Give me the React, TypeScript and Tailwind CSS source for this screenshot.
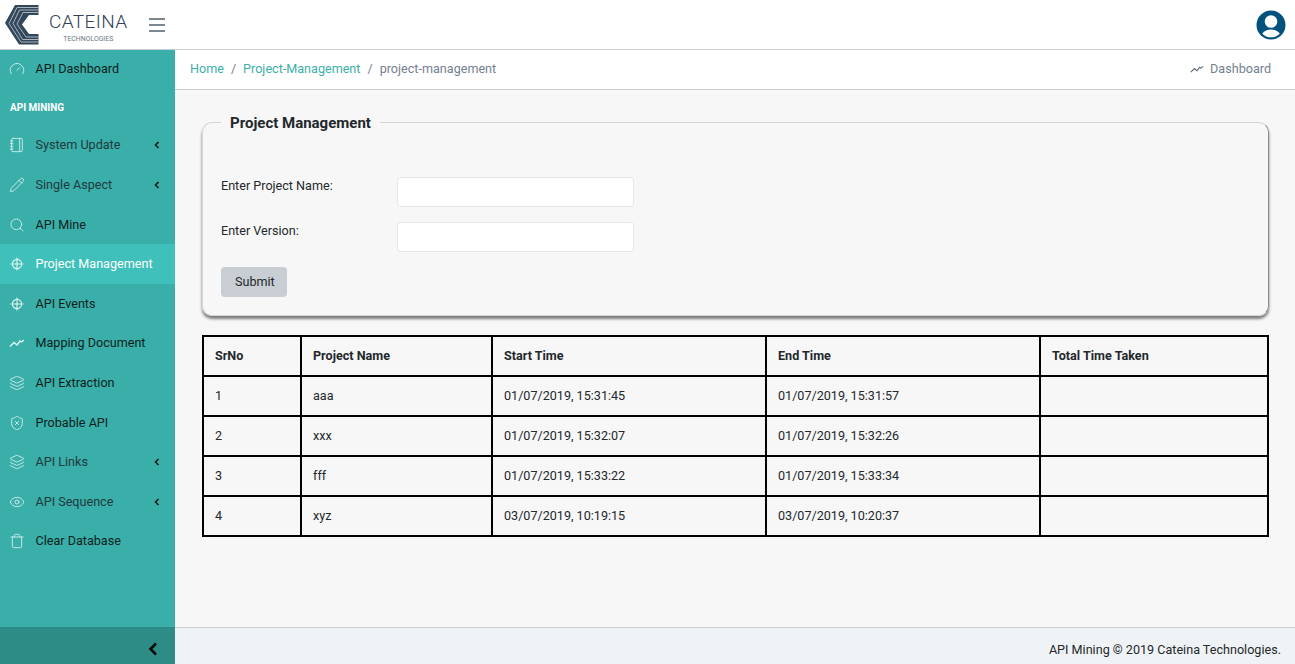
import React from "react";
import { Eye, Layers, Notebook, Pencil, Search, Trash, ShieldX, Gauge } from "lucide-react";

const ic = "w-4 h-4 text-[#e2f6f3]";
const s = 1.2;
const Cross = () => (
  <svg viewBox="-1 -1 16 16" className={ic} fill="none" stroke="currentColor" strokeWidth={1.1}>
    <circle cx="7" cy="7" r="4.6" />
    <path d="M7 0.5v13M0.5 7h13" />
  </svg>
);
const Trend = ({ className = ic }: { className?: string }) => (
  <svg viewBox="0 0 16 16" className={className} fill="none" stroke="currentColor" strokeWidth={1.3}>
    <path d="M1 11.5 5 7.5l3 2.5 3-4 1.5 1L15 5" />
  </svg>
);
const Chevron = () => (
  <svg viewBox="0 0 8 10" className="w-[6px] h-[8px] text-[#111]" fill="none" stroke="currentColor" strokeWidth={2}>
    <path d="M6 1 2 5l4 4" />
  </svg>
);

type Item = { label: string; icon: React.ReactNode; chev?: boolean; active?: boolean; muted?: boolean; h: string };
const items: Item[] = [
  { label: "System Update", icon: <Notebook className={ic} strokeWidth={s} />, chev: true, muted: true, h: "h-10" },
  { label: "Single Aspect", icon: <Pencil className={ic} strokeWidth={s} />, chev: true, muted: true, h: "h-10" },
  { label: "API Mine", icon: <Search className={ic} strokeWidth={s} />, h: "h-[39px] pt-[1px]" },
  { label: "Project Management", icon: <Cross />, active: true, h: "h-10" },
  { label: "API Events", icon: <Cross />, h: "h-[39px] pt-[1px]" },
  { label: "Mapping Document", icon: <Trend />, h: "h-10" },
  { label: "API Extraction", icon: <Layers className={ic} strokeWidth={s} />, h: "h-10" },
  { label: "Probable API", icon: <ShieldX className={ic} strokeWidth={s} />, h: "h-[39px] pt-[1px]" },
  { label: "API Links", icon: <Layers className={ic} strokeWidth={s} />, chev: true, muted: true, h: "h-10" },
  { label: "API Sequence", icon: <Eye className={ic} strokeWidth={s} />, chev: true, muted: true, h: "h-[39px] pt-[1px]" },
  { label: "Clear Database", icon: <Trash className={ic} strokeWidth={s} />, h: "h-[39px] pt-[1px]" },
];

const rows = [
  ["1", "aaa", "01/07/2019, 15:31:45", "01/07/2019, 15:31:57", ""],
  ["2", "xxx", "01/07/2019, 15:32:07", "01/07/2019, 15:32:26", ""],
  ["3", "fff", "01/07/2019, 15:33:22", "01/07/2019, 15:33:34", ""],
  ["4", "xyz", "03/07/2019, 10:19:15", "03/07/2019, 10:20:37", ""],
];
const heads = ["SrNo", "Project Name", "Start Time", "End Time", "Total Time Taken"];
const widths = ["w-[98px]", "w-[191px]", "w-[274px]", "w-[274px]", ""];

export default function App() {
  return (
    <div className="h-[664px] w-[1295px] overflow-hidden flex flex-col bg-[#f7f7f7] text-[12.6px] text-[#23282c] font-['Roboto',sans-serif]">
      <header className="h-[50px] shrink-0 bg-white border-b border-[#c8ced3] flex items-center">
        <div className="w-[141px] flex items-center pl-[5px] shrink-0">
          <svg viewBox="0 0 34 40" className="w-[34px] h-[40px]">
            <path d="M10 0H33.5V10H24L17 19.5 24 29H33.5V39.5H14L0 18Z" fill="#33475b" />
            <g fill="none" stroke="#c9d1d8" strokeWidth={0.8}>
              <path d="M33.5 2.5H12L4 18.5 16 37H33.5" />
              <path d="M33.5 5H14.5L8 18.5 17.5 34.5H33.5" />
              <path d="M33.5 7.5H18L12 19 21 32H33.5" />
            </g>
          </svg>
          <div className="ml-[10px] flex flex-col items-center pt-[5px]">
            <span className="text-[19px] leading-[22px] font-light tracking-[0.4px] text-[#2f4256]">CATEINA</span>
            <span className="text-[6.9px] leading-[8px] mt-[2px] text-[#6b7985]">TECHNOLOGIES</span>
          </div>
        </div>
        <div className="ml-[8px] w-[16px] flex flex-col gap-[4px]">
          <div className="h-[2px] bg-[#7d8790]" />
          <div className="h-[2px] bg-[#7d8790]" />
          <div className="h-[2px] bg-[#7d8790]" />
        </div>
        <div className="ml-auto mr-[9px]">
          <svg viewBox="0 0 30 30" className="w-[30px] h-[30px]">
            <defs>
              <clipPath id="c"><circle cx="15" cy="15" r="12.3" /></clipPath>
            </defs>
            <circle cx="15" cy="15" r="14.5" fill="#03527e" />
            <circle cx="15" cy="11.5" r="6.3" fill="#fff" />
            <g clipPath="url(#c)" fill="#fff">
              <ellipse cx="15" cy="27" rx="10" ry="7.6" />
            </g>
          </svg>
        </div>
      </header>

      <div className="flex-1 flex min-h-0">
        <aside className="w-[175px] shrink-0 flex flex-col bg-[#3aaea8] text-[#0e1f1e]">
          <div className="flex-1">
            <div className="h-[38px] flex items-center">
              <span className="w-[35.5px] pl-[9px] flex -mt-[1px]"><Gauge className={ic} strokeWidth={s} /></span>
              <span>API Dashboard</span>
            </div>
            <div className="h-[37px] pt-[13px] pl-[10px] text-[10px] font-bold text-white leading-[14px]">API MINING</div>
            {items.map((it) => (
              <div key={it.label} className={`${it.h} flex items-center ${it.active ? "bg-[#40c0ba] text-white" : ""} ${it.muted ? "text-[#1f3a3f]" : ""}`}>
                <span className="w-[35.5px] pl-[9px] flex -mt-[1px]">{it.icon}</span>
                <span>{it.label}</span>
                {it.chev && <span className="ml-auto mr-[15px] flex"><Chevron /></span>}
              </div>
            ))}
          </div>
          <div className="h-[37px] bg-[#2e8c86] flex items-center justify-end pt-[6px] pr-[17px]">
            <svg viewBox="0 0 10 14" className="w-[10px] h-[14px] text-[#0a0a0a]" fill="none" stroke="currentColor" strokeWidth={2.6}>
              <path d="M8 1.5 2.5 7 8 12.5" />
            </svg>
          </div>
        </aside>

        <main className="flex-1 flex flex-col min-w-0">
          <nav className="h-[40px] shrink-0 bg-white border-b border-[#c8ced3] flex items-center pb-[1px] pl-[15px] pr-[24px]">
            <span className="text-[#3bb0a9]">Home</span>
            <span className="mx-[7px] text-[#73818f]">/</span>
            <span className="text-[#3bb0a9]">Project-Management</span>
            <span className="mx-[7px] text-[#73818f]">/</span>
            <span className="text-[#73818f]">project-management</span>
            <span className="ml-auto flex items-center text-[#73818f]">
              <Trend className="w-[14px] h-[14px] mr-[6px] text-[#5c6873]" />
              Dashboard
            </span>
          </nav>

          <div className="flex-1 min-h-0 pt-[22px] pl-[27px] pr-[26px]">
            <fieldset className="h-[204px] border border-[#d4d4d4] border-r-[#8a8a8a] rounded-[10px] shadow-[0_3px_3px_rgba(0,0,0,0.5)] pl-[18px] pr-[17px]">
              <legend className="px-[9px] pt-[2px] text-[15px] font-bold leading-[18px] text-[#23282c]">Project Management</legend>
              <div className="pt-[45px] flex items-start">
                <label className="w-[176px] pt-[1px] leading-[15px] shrink-0">Enter Project Name:</label>
                <input className="w-[237px] h-[30px] bg-white border border-[#e4e7ea] rounded-[4px]" />
              </div>
              <div className="pt-[15px] flex items-start">
                <label className="w-[176px] pt-[1px] leading-[15px] shrink-0">Enter Version:</label>
                <input className="w-[237px] h-[30px] bg-white border border-[#e4e7ea] rounded-[4px]" />
              </div>
              <button className="mt-[15px] w-[66px] h-[30px] bg-[#c8ced3] rounded-[4px] text-[12.6px] text-left pl-[14px] text-[#23282c] block">Submit</button>
            </fieldset>

            <table className="mt-[19px] w-[1067px] table-fixed border-collapse border-2 border-black">
              <thead>
                <tr className="h-[40px]">
                  {heads.map((h, i) => (
                    <th key={h} className={`${widths[i]} border-2 border-black text-left font-bold pl-[11px] text-[12.6px]`}>{h}</th>
                  ))}
                </tr>
              </thead>
              <tbody>
                {rows.map((r) => (
                  <tr key={r[0]} className="h-[40px]">
                    {r.map((c, i) => (
                      <td key={i} className="border-2 border-black pl-[11px]">{c}</td>
                    ))}
                  </tr>
                ))}
              </tbody>
            </table>
          </div>

          <footer className="h-[37px] shrink-0 bg-[#f0f3f5] border-t border-[#c8ced3] flex items-center justify-end pt-[9px] pr-[14px]">
            API Mining © 2019 Cateina Technologies.
          </footer>
        </main>
      </div>
    </div>
  );
}
